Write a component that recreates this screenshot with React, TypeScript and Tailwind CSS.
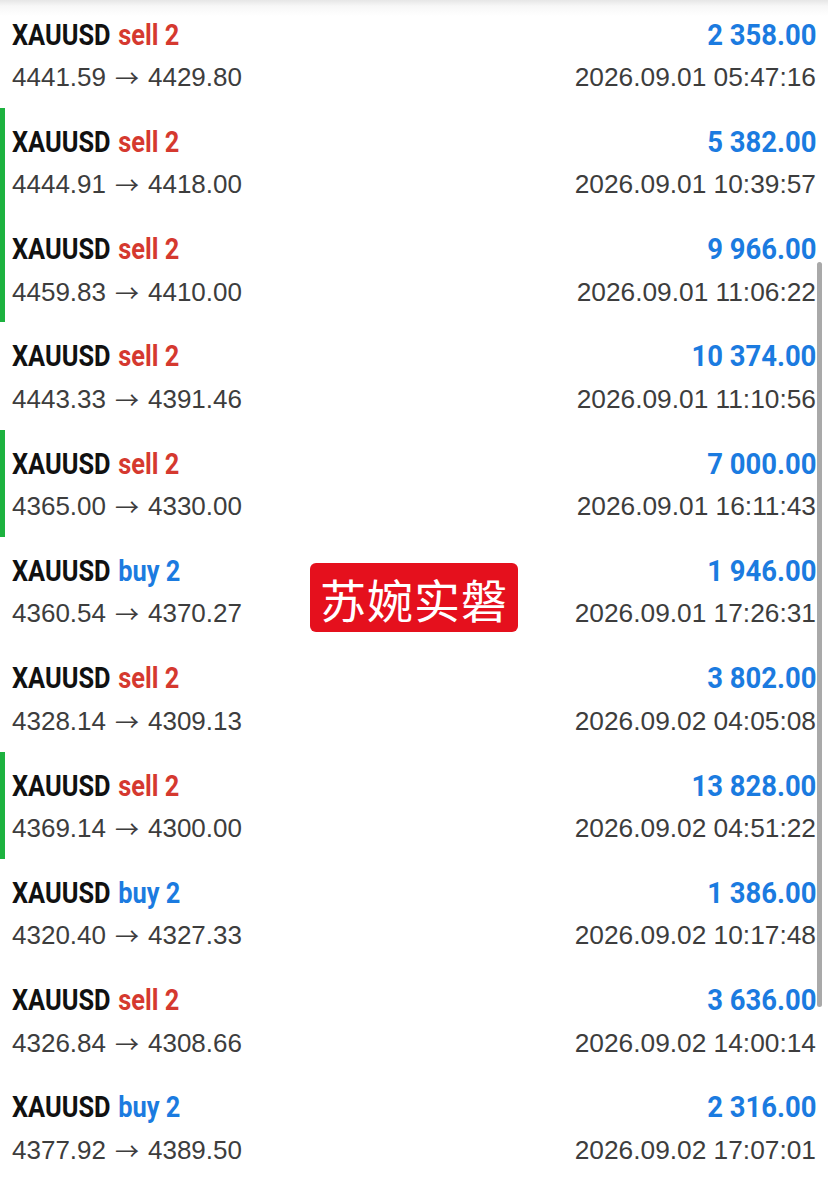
import React from "react";

type Trade = {
  side: "sell" | "buy";
  from: string;
  to: string;
  profit: string;
  time: string;
  bar?: boolean;
};

const trades: Trade[] = [
  { side: "sell", from: "4441.59", to: "4429.80", profit: "2 358.00", time: "2026.09.01 05:47:16" },
  { side: "sell", from: "4444.91", to: "4418.00", profit: "5 382.00", time: "2026.09.01 10:39:57", bar: true },
  { side: "sell", from: "4459.83", to: "4410.00", profit: "9 966.00", time: "2026.09.01 11:06:22", bar: true },
  { side: "sell", from: "4443.33", to: "4391.46", profit: "10 374.00", time: "2026.09.01 11:10:56" },
  { side: "sell", from: "4365.00", to: "4330.00", profit: "7 000.00", time: "2026.09.01 16:11:43", bar: true },
  { side: "buy", from: "4360.54", to: "4370.27", profit: "1 946.00", time: "2026.09.01 17:26:31" },
  { side: "sell", from: "4328.14", to: "4309.13", profit: "3 802.00", time: "2026.09.02 04:05:08" },
  { side: "sell", from: "4369.14", to: "4300.00", profit: "13 828.00", time: "2026.09.02 04:51:22", bar: true },
  { side: "buy", from: "4320.40", to: "4327.33", profit: "1 386.00", time: "2026.09.02 10:17:48" },
  { side: "sell", from: "4326.84", to: "4308.66", profit: "3 636.00", time: "2026.09.02 14:00:14" },
  { side: "buy", from: "4377.92", to: "4389.50", profit: "2 316.00", time: "2026.09.02 17:07:01" },
];

function Row({ t }: { t: Trade }) {
  return (
    <div className="relative h-[107.3px] px-[12px] pt-[16px]">
      {t.bar && <div className="absolute left-0 top-0 bottom-0 w-[5px] bg-[#1db23f]" />}
      <div className="flex items-center justify-between h-[36px] leading-[36px] font-['Roboto',sans-serif] font-bold text-[29.5px]">
        <span className="inline-block origin-left scale-x-[0.86] whitespace-nowrap">
          <span className="text-[#111111]">XAUUSD</span>
          <span className={t.side === "sell" ? "ml-[9px] text-[#d5392f]" : "ml-[9px] text-[#1b7be0]"}>
            {t.side} 2
          </span>
        </span>
        <span className="inline-block origin-right scale-x-[0.93] whitespace-nowrap text-[#1b7be0]">
          {t.profit}
        </span>
      </div>
      <div className="mt-[9.5px] flex items-center justify-between h-[30px] leading-[30px] font-['Liberation_Sans',Arial,sans-serif] text-[26px] text-[#3d3d3d]">
        <span className="flex items-center whitespace-nowrap">
          <span>{t.from}</span>
          <span className="mx-[9px] font-['Noto_Sans_CJK_SC',sans-serif] text-[24px] leading-[30px] text-[#3d3d3d]">
            →
          </span>
          <span>{t.to}</span>
        </span>
        <span className="whitespace-nowrap text-[26.3px]">{t.time}</span>
      </div>
    </div>
  );
}

export default function App() {
  return (
    <div className="relative w-[828px] h-[1186px] overflow-hidden bg-[linear-gradient(to_bottom,#e6e6e6_0px,#f7f7f7_6px,#ffffff_16px)]">
      <div className="pt-[0.5px]">
        {trades.map((t, i) => (
          <Row key={i} t={t} />
        ))}
      </div>
      <div className="absolute left-[817px] top-[262px] w-[5px] h-[745px] rounded-full bg-[#a9a9a9]" />
      <div className="absolute left-[310px] top-[563px] w-[208px] h-[69px] rounded-[6px] bg-[#e5101d] flex items-center justify-center">
        <span className="text-white text-[46px] leading-none font-['Noto_Sans_CJK_SC',sans-serif] tracking-[1px]">
          苏婉实磐
        </span>
      </div>
    </div>
  );
}
